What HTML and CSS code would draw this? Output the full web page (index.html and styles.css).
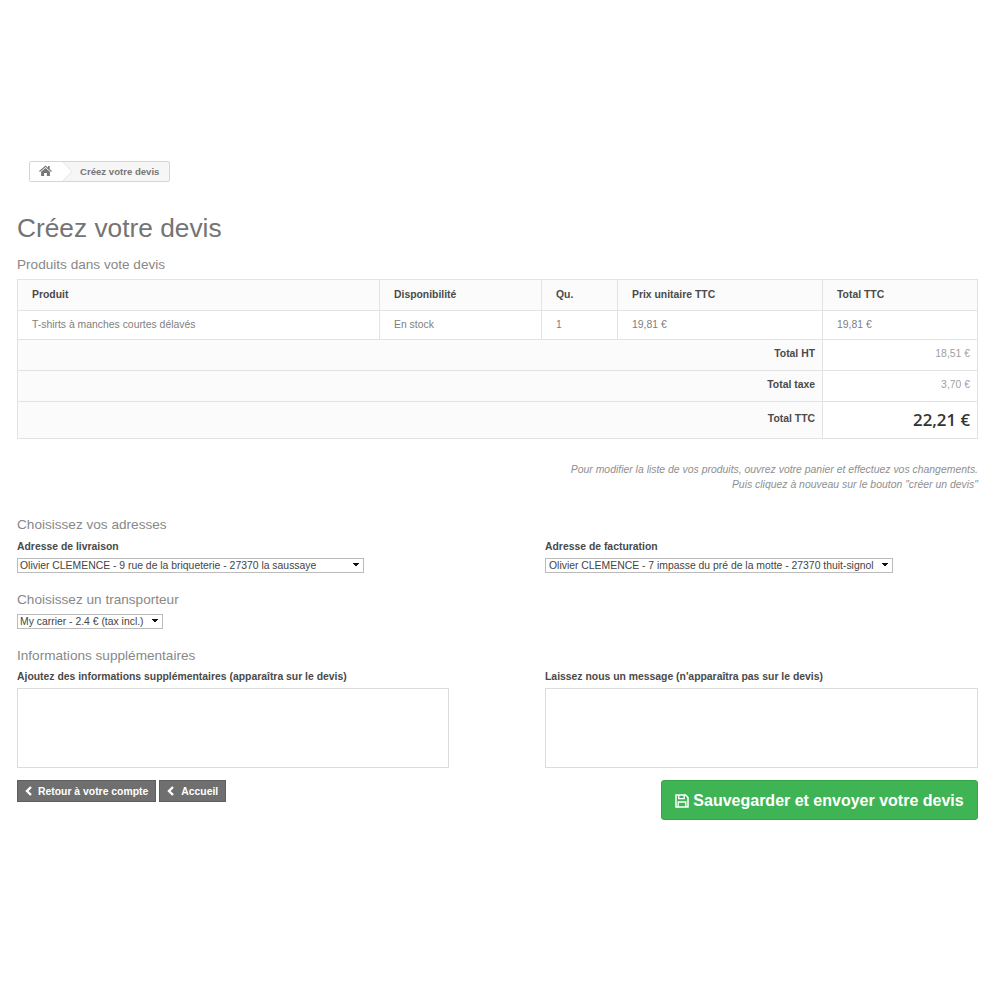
FILE: index.html
```html
<!DOCTYPE html>
<html lang="fr">
<head>
  <meta charset="UTF-8">
  <title>Créez votre devis</title>
  <link rel="stylesheet" href="styles.css">
</head>
<body>
  <div class="breadcrumb">
    <span class="crumb-home">
      <svg width="13" height="11" viewBox="0 0 14 12"><path fill="#777" d="M7 .6 0 6.6l.8.9L7 2.3l6.2 5.2.8-.9-2.4-2V1h-1.9v1.9z"/><path fill="#777" d="M7 3.3 2.2 7.3V12h3.3V8.6h3V12h3.3V7.3z"/></svg>
    </span>
    <svg class="crumb-sep" width="12" height="19" viewBox="0 0 12 19"><path d="M0 0h2l9 9.5L2 19H0z" fill="#fff"/><path d="M2 0l9 9.5L2 19" fill="none" stroke="#e2e2e2"/></svg>
    <span class="crumb-text">Créez votre devis</span>
  </div>

  <h1>Créez votre devis</h1>
  <h3 class="first">Produits dans vote devis</h3>

  <table class="cart">
    <colgroup>
      <col class="c1"><col class="c2"><col class="c3"><col class="c4"><col class="c5">
    </colgroup>
    <thead>
      <tr>
        <th>Produit</th>
        <th>Disponibilité</th>
        <th>Qu.</th>
        <th>Prix unitaire TTC</th>
        <th>Total TTC</th>
      </tr>
    </thead>
    <tbody>
      <tr class="line">
        <td>T-shirts à manches courtes délavés</td>
        <td>En stock</td>
        <td>1</td>
        <td>19,81 €</td>
        <td>19,81 €</td>
      </tr>
      <tr class="sum">
        <td colspan="4" class="sum-label">Total HT</td>
        <td class="sum-value">18,51 €</td>
      </tr>
      <tr class="sum">
        <td colspan="4" class="sum-label">Total taxe</td>
        <td class="sum-value">3,70 €</td>
      </tr>
      <tr class="sum grand">
        <td colspan="4" class="sum-label">Total TTC</td>
        <td class="sum-value">22,21 €</td>
      </tr>
    </tbody>
  </table>

  <p class="note">Pour modifier la liste de vos produits, ouvrez votre panier et effectuez vos changements.<br>Puis cliquez à nouveau sur le bouton "créer un devis"</p>

  <h3 class="addr-title">Choisissez vos adresses</h3>
  <div class="two-cols">
    <div>
      <label for="delivery">Adresse de livraison</label>
      <select id="delivery" class="sel-delivery">
        <option>Olivier CLEMENCE - 9 rue de la briqueterie - 27370 la saussaye</option>
      </select>
    </div>
    <div>
      <label for="invoice">Adresse de facturation</label>
      <select id="invoice" class="sel-invoice">
        <option>Olivier CLEMENCE - 7 impasse du pré de la motte - 27370 thuit-signol</option>
      </select>
    </div>
  </div>

  <h3 class="carrier-title">Choisissez un transporteur</h3>
  <select class="sel-carrier">
    <option>My carrier - 2.4 € (tax incl.)</option>
  </select>

  <h3 class="info-title">Informations supplémentaires</h3>
  <div class="two-cols info-cols">
    <div>
      <label for="infos">Ajoutez des informations supplémentaires (apparaîtra sur le devis)</label>
      <textarea id="infos"></textarea>
    </div>
    <div>
      <label for="message">Laissez nous un message (n'apparaîtra pas sur le devis)</label>
      <textarea id="message"></textarea>
    </div>
  </div>

  <div class="actions">
    <div class="back-links">
      <a class="btn-grey" href="#">
        <svg width="8" height="10" viewBox="0 0 8 10"><path d="M6 1 2 5l4 4" fill="none" stroke="#fff" stroke-width="2.4"/></svg>
        Retour à votre compte
      </a>
      <a class="btn-grey" href="#">
        <svg width="8" height="10" viewBox="0 0 8 10"><path d="M6 1 2 5l4 4" fill="none" stroke="#fff" stroke-width="2.4"/></svg>
        Accueil
      </a>
    </div>
    <button class="btn-save" type="button">
      <svg width="14" height="14" viewBox="0 0 14 14"><path fill="none" stroke="#fff" stroke-width="1.5" d="M1 1h9.5L13 3.5V13H1z"/><path fill="none" stroke="#fff" stroke-width="1.3" d="M3.8 1v3.6h5.4V1M3.2 13V8h7.6v5"/></svg>
      Sauvegarder et envoyer votre devis
    </button>
  </div>
</body>
</html>
```

FILE: styles.css
```css
body {
  font-family: "Liberation Sans", Arial, sans-serif;
  font-size: 11px;
  color: #777;
  background-color: #fff;
  margin: 0;
  padding: 161px 22px 0 17px;
}

.breadcrumb {
  display: inline-flex;
  align-items: center;
  height: 19px;
  margin-left: 12px;
  background-color: #f6f6f6;
  border: 1px solid #d6d4d4;
  border-radius: 2px;
  font-size: 9.6px;
  font-weight: bold;
  color: #777;
  vertical-align: top;
}

.crumb-home {
  display: flex;
  justify-content: center;
  padding-top: 3px;
  box-sizing: border-box;
  width: 31px;
  height: 19px;
  background-color: #fff;
}

.crumb-sep {
  margin-right: 7px;
}

.crumb-text {
  padding-right: 10px;
}

h1 {
  font-size: 26.3px;
  font-weight: normal;
  line-height: 30px;
  color: #747474;
  margin: 31px 0 0;
}

h3 {
  font-size: 13.6px;
  font-weight: normal;
  line-height: 16px;
  color: #888;
  margin: 0;
}

h3.first {
  margin-top: 14px;
}

.cart {
  width: 960px;
  margin-top: 6px;
  border-collapse: collapse;
  table-layout: fixed;
  border: 1px solid #dedede;
}

.c1 { width: 362px; }
.c2 { width: 162px; }
.c3 { width: 76px; }
.c4 { width: 205px; }
.c5 { width: 155px; }

.cart th, .cart td {
  border: 1px solid #e3e3e3;
  padding: 0 14px 2px;
  font-size: 10.4px;
  text-align: left;
}

.cart th {
  height: 28px;
  background-color: #fbfbfb;
  color: #4a4a4a;
  font-weight: bold;
}

.line td {
  height: 26px;
  color: #808080;
}

.cart .sum td {
  height: 27px;
  padding-bottom: 3px;
  background-color: #fbfbfb;
}

.cart .sum .sum-label {
  text-align: right;
  font-weight: bold;
  color: #4a4a4a;
  padding-right: 7px;
}

.cart .sum .sum-value {
  text-align: right;
  color: #a0a0a0;
  background-color: #fff;
  padding-right: 7px;
}

.cart .grand td {
  height: 33px;
}

.cart .grand .sum-value {
  font-family: "Open Sans", sans-serif;
  font-size: 16.8px;
  font-weight: 600;
  color: #333;
  padding-bottom: 2px;
}

.note {
  margin: 23px 0 0;
  text-align: right;
  font-style: italic;
  font-size: 10.43px;
  line-height: 15px;
  color: #8f8f8f;
}

.addr-title {
  margin-top: 25px;
}

.two-cols {
  display: grid;
  grid-template-columns: 432px 433px;
  column-gap: 96px;
}

label {
  display: block;
  font-size: 10.4px;
  font-weight: bold;
  line-height: 12px;
  color: #4a4a4a;
  margin: 8px 0 5px;
}

.info-cols label {
  margin-top: 7px;
}

select {
  display: block;
  appearance: none;
  height: 15px;
  padding: 0 0 0 2px;
  font-family: "Liberation Sans", Arial, sans-serif;
  font-size: 10.4px;
  color: #444;
  border: 1px solid #bbb;
  border-radius: 0;
  background-color: #fff;
  background-image: linear-gradient(to top right, transparent 50%, #111 50%), linear-gradient(to bottom right, #111 50%, transparent 50%);
  background-size: 3px 4px;
  background-repeat: no-repeat;
  background-position: right 7px top 4px, right 4px top 4px;
}

.sel-delivery { width: 347px; }
.sel-invoice { width: 348px; padding-left: 3px; }
.sel-carrier { width: 146px; }

.carrier-title {
  margin-top: 19px;
}

.carrier-title + select {
  margin-top: 6px;
}

.info-title {
  margin-top: 19px;
}

textarea {
  display: block;
  box-sizing: border-box;
  width: 100%;
  height: 80px;
  margin: 0;
  border: 1px solid #dcdcdc;
  resize: none;
}

.actions {
  display: flex;
  justify-content: space-between;
  align-items: flex-start;
  margin-top: 12px;
}

.back-links {
  display: flex;
  gap: 3px;
}

.btn-grey {
  display: flex;
  align-items: center;
  gap: 5px;
  box-sizing: border-box;
  height: 22px;
  padding: 0 7px;
  background-color: #6f6f6f;
  border: 1px solid #5f5f5f;
  color: #fff;
  font-size: 10.4px;
  font-weight: bold;
  text-decoration: none;
}

.btn-grey:last-child {
  gap: 6px;
}

.btn-save {
  display: flex;
  align-items: center;
  justify-content: center;
  gap: 4px;
  width: 317px;
  height: 40px;
  padding: 1px 0 0;
  background-color: #3fb454;
  border: 1px solid #39a34c;
  border-radius: 3px;
  color: #fff;
  font-family: "Liberation Sans", Arial, sans-serif;
  font-size: 16px;
  font-weight: bold;
}
```
